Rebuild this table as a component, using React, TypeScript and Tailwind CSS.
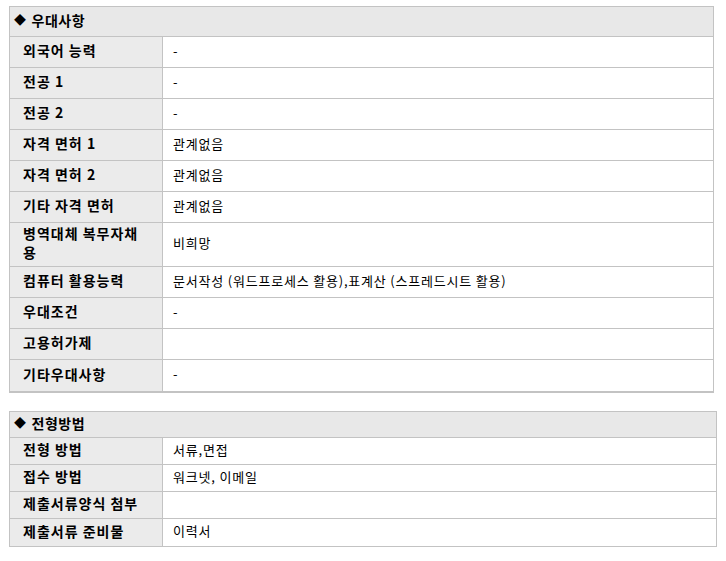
import React from 'react';

type Row = { label: string; value: string; tall?: boolean };

const benefits: Row[] = [
  { label: '외국어 능력', value: '-' },
  { label: '전공 1', value: '-' },
  { label: '전공 2', value: '-' },
  { label: '자격 면허 1', value: '관계없음' },
  { label: '자격 면허 2', value: '관계없음' },
  { label: '기타 자격 면허', value: '관계없음' },
  { label: '병역대체 복무자채용', value: '비희망', tall: true },
  { label: '컴퓨터 활용능력', value: '문서작성 (워드프로세스 활용),표계산 (스프레드시트 활용)' },
  { label: '우대조건', value: '-' },
  { label: '고용허가제', value: '' },
  { label: '기타우대사항', value: '-' },
];

const selection: Row[] = [
  { label: '전형 방법', value: '서류,면접' },
  { label: '접수 방법', value: '워크넷, 이메일' },
  { label: '제출서류양식 첨부', value: '' },
  { label: '제출서류 준비물', value: '이력서' },
];

const InfoTable = ({
  title,
  rows,
  rowH,
  headH,
  className,
}: {
  title: string;
  rows: Row[];
  rowH: string;
  headH: string;
  className: string;
}) => (
  <section className={`border border-[#c3c3c3] ${className}`}>
    <div
      className={`flex items-center pl-[4px] pb-[3px] bg-[#e8e8e8] border-b border-[#c3c3c3] font-bold text-[14px] tracking-[0.5px] ${headH}`}
    >
      <span className="text-[12px] mr-[5px]">◆</span>
      {title}
    </div>
    {rows.map((r, i) => (
      <div
        key={r.label}
        className={`grid grid-cols-[153px_1fr] ${i < rows.length - 1 ? 'border-b border-[#c3c3c3]' : ''} ${
          r.tall ? 'h-[44px]' : rowH
        }`}
      >
        <div className="flex items-center bg-[#ebebeb] border-r border-[#c3c3c3] pl-[13px] pr-[12px] pb-[3px] font-bold text-[14px] tracking-[1px] leading-[19px]">
          {r.label}
        </div>
        <div className="flex items-center pl-[10px] pb-[3px] tracking-[0.8px]">{r.value}</div>
      </div>
    ))}
  </section>
);

const App = () => {
  return (
    <div className="bg-white w-[726px] h-[561px] pt-[6px] pl-[9px] text-[13px] text-black font-['Noto_Sans_CJK_KR',sans-serif]">
      <InfoTable
        title="우대사항"
        rows={benefits}
        rowH="h-[31px]"
        headH="h-[30px]"
        className="w-[705px] border-b-2"
      />
      <InfoTable
        title="전형방법"
        rows={selection}
        rowH="h-[27px]"
        headH="h-[26px]"
        className="w-[708px] mt-[18px]"
      />
    </div>
  );
};

export default App;
